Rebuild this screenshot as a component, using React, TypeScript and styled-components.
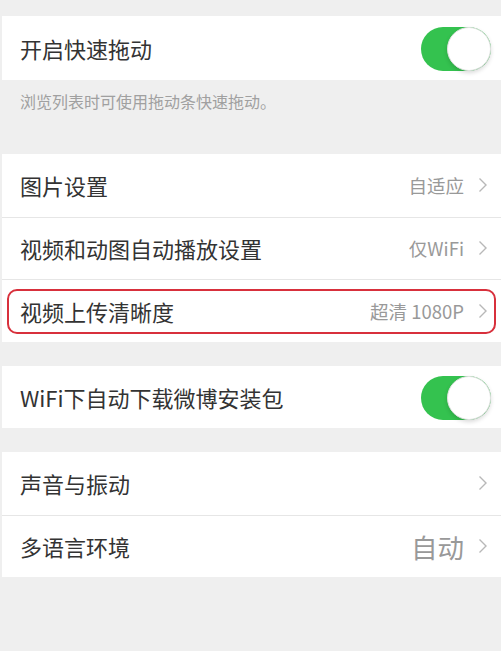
import React from 'react';
import styled, { createGlobalStyle } from 'styled-components';

const GlobalStyle = createGlobalStyle`
  html, body {
    margin: 0;
    padding: 0;
    background: #efefef;
  }
  body {
    font-family: "Noto Sans CJK SC", "Noto Sans", sans-serif;
  }
`;

type Item = {
  title: string;
  value?: string;
  big?: boolean;
  toggle?: boolean;
  highlighted?: boolean;
};

export default function App() {
  return (
    <>
      <GlobalStyle />
      <Page>
        <Gap $h={16} />
        <Group>
          <SettingRow item={{ title: '开启快速拖动', toggle: true }} tall />
        </Group>
        <Caption>浏览列表时可使用拖动条快速拖动。</Caption>
        <Group>
          <SettingRow item={{ title: '图片设置', value: '自适应' }} />
          <SettingRow item={{ title: '视频和动图自动播放设置', value: '仅WiFi' }} />
          <SettingRow
            item={{ title: '视频上传清晰度', value: '超清 1080P', highlighted: true }}
          />
        </Group>
        <Gap $h={24} />
        <Group>
          <SettingRow item={{ title: 'WiFi下自动下载微博安装包', toggle: true }} />
        </Group>
        <Gap $h={24} />
        <Group>
          <SettingRow item={{ title: '声音与振动' }} />
          <SettingRow item={{ title: '多语言环境', value: '自动', big: true }} />
        </Group>
      </Page>
    </>
  );
}

function SettingRow({ item, tall }: { item: Item; tall?: boolean }) {
  return (
    <Row $tall={tall} $highlighted={item.highlighted}>
      <Title>{item.title}</Title>
      {item.toggle ? (
        <Switch>
          <Knob />
        </Switch>
      ) : (
        <Accessory>
          {item.value ? <Value $big={item.big}>{item.value}</Value> : null}
          <Chevron viewBox="0 0 10 16">
            <path d="M1.5 1.5 L8 8 L1.5 14.5" />
          </Chevron>
        </Accessory>
      )}
    </Row>
  );
}

const Page = styled.div`
  padding: 0 0 74px 2px;
  min-height: 651px;
  box-sizing: border-box;
`;

const Gap = styled.div<{ $h: number }>`
  height: ${p => p.$h}px;
`;

const Group = styled.div`
  background: #fff;
  display: flex;
  flex-direction: column;
`;

const Row = styled.div<{ $tall?: boolean; $highlighted?: boolean }>`
  position: relative;
  height: ${p => (p.$tall ? 64 : 62.5)}px;
  display: flex;
  align-items: center;
  justify-content: space-between;
  padding: 0 13px 0 18px;
  box-sizing: border-box;

  & + & {
    border-top: 1px solid #e6e6e6;
  }

  ${p =>
    p.$highlighted &&
    `
    &::after {
      content: '';
      position: absolute;
      left: 5px;
      right: 5px;
      top: 9px;
      bottom: 8px;
      border: 2px solid #d8303c;
      border-radius: 10px;
      pointer-events: none;
    }
  `}
`;

const Title = styled.span`
  font-size: 22px;
  color: #333;
  letter-spacing: 0;
`;

const Accessory = styled.div`
  display: flex;
  align-items: center;
  gap: 14px;
`;

const Value = styled.span<{ $big?: boolean }>`
  font-size: ${p => (p.$big ? 26.5 : 18.5)}px;
  color: #999;
`;

const Chevron = styled.svg`
  width: 10px;
  height: 16px;
  fill: none;
  stroke: #b8b8b8;
  stroke-width: 1.4;
`;

const Switch = styled.div`
  width: 70px;
  height: 44px;
  border-radius: 22px;
  background: #34c24f;
  display: flex;
  justify-content: flex-end;
  margin-right: -3px;
  margin-top: 2px;
`;

const Knob = styled.div`
  width: 44px;
  height: 44px;
  border-radius: 50%;
  background: #fff;
  box-sizing: border-box;
  border: 1px solid #e2e2e2;
  box-shadow: 0 2px 4px rgba(0, 0, 0, 0.15);
`;

const Caption = styled.div`
  height: 74px;
  box-sizing: border-box;
  padding: 9px 0 0 18px;
  font-size: 16px;
  color: #a0a0a0;
`;
